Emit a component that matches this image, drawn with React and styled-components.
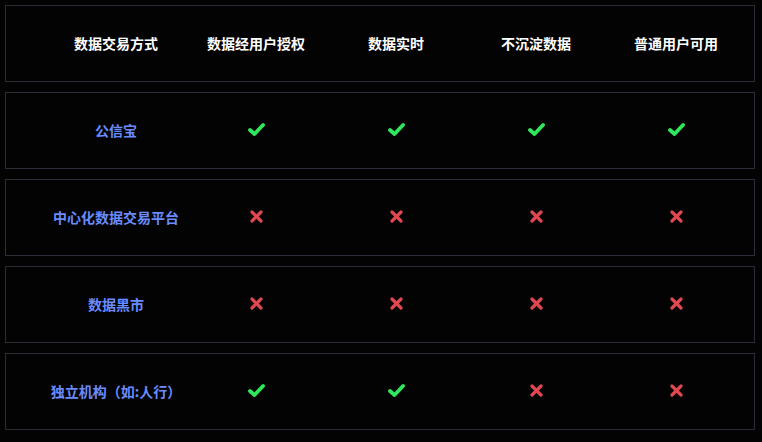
import styled, { createGlobalStyle } from "styled-components";

const GlobalStyle = createGlobalStyle`
  html, body {
    margin: 0;
    padding: 0;
    background: #030303;
    font-family: "Noto Sans CJK SC", "Liberation Sans", sans-serif;
  }
`;

const Page = styled.div`
  padding: 5px 0 0 5px;
  display: flex;
  flex-direction: column;
  gap: 10px;
  width: 750px;
`;

const Row = styled.div`
  display: grid;
  grid-template-columns: repeat(5, 140px);
  align-items: center;
  height: 75px;
  padding-left: 40px;
  border: 1px solid #2a2c38;
  background: #030303;
`;

const Cell = styled.div`
  display: flex;
  justify-content: center;
  align-items: center;
  font-size: 14px;
  font-weight: 700;
  line-height: 20px;
  white-space: nowrap;
  margin-top: -2px;
  color: ${(p) => (p.$head ? "#ffffff" : "#6a8cff")};
`;

const Check = () => (
  <svg width="17" height="15" viewBox="0 0 17 15">
    <polyline
      points="2,8 6.5,12 15,3"
      fill="none"
      stroke="#2fe65c"
      strokeWidth="3.8"
      strokeLinecap="round"
      strokeLinejoin="round"
    />
  </svg>
);

const Cross = () => (
  <svg width="13" height="13" viewBox="0 0 13 13">
    <g stroke="#e0474f" strokeWidth="3.2" strokeLinecap="round">
      <line x1="2" y1="2" x2="11" y2="11" />
      <line x1="11" y1="2" x2="2" y2="11" />
    </g>
  </svg>
);

const headers = ["数据交易方式", "数据经用户授权", "数据实时", "不沉淀数据", "普通用户可用"];

const rows = [
  { name: "公信宝", marks: [1, 1, 1, 1] },
  { name: "中心化数据交易平台", marks: [0, 0, 0, 0] },
  { name: "数据黑市", marks: [0, 0, 0, 0] },
  { name: "独立机构（如:人行）", marks: [1, 1, 0, 0] },
];

export default function App() {
  return (
    <>
      <GlobalStyle />
      <Page>
        <Row>
          {headers.map((h) => (
            <Cell key={h} $head>
              {h}
            </Cell>
          ))}
        </Row>
        {rows.map((r) => (
          <Row key={r.name}>
            <Cell>{r.name}</Cell>
            {r.marks.map((m, i) => (
              <Cell key={i}>{m ? <Check /> : <Cross />}</Cell>
            ))}
          </Row>
        ))}
      </Page>
    </>
  );
}
